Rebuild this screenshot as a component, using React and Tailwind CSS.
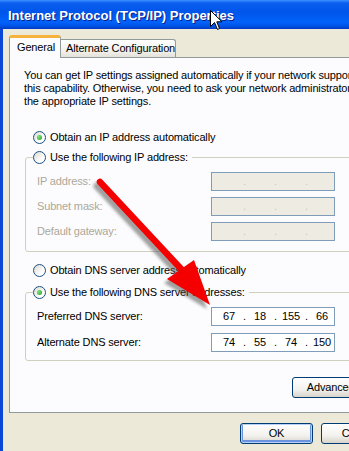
import React from 'react';

const labelFont = "font-['Liberation_Sans',Arial,sans-serif]";

function Radio({ checked }) {
  return (
    <span className="w-[13px] h-[13px] rounded-full border border-[#1C5180] bg-[linear-gradient(135deg,#DCD9CF,#FFFFFF_70%)] flex items-center justify-center shrink-0">
      {checked && (
        <span className="w-[5px] h-[5px] rounded-full bg-[radial-gradient(circle_at_35%_35%,#7BE27A,#21A121)]" />
      )}
    </span>
  );
}

function RadioRow({ checked, children }) {
  return (
    <div className="flex items-center gap-[4px] h-[13px]">
      <Radio checked={checked} />
      <span className="leading-[13px] whitespace-nowrap">{children}</span>
    </div>
  );
}

function IpBox({ octets, disabled }) {
  const vals = octets || ['', '', '', ''];
  return (
    <div
      className={`w-[124px] h-[19px] border border-[#7F9DB9] flex items-center pl-[5px] shrink-0 ${
        disabled ? 'bg-[#EEEBE2] text-[#C9C6BC]' : 'bg-white text-black'
      }`}
    >
      {vals.map((v, i) => (
        <React.Fragment key={i}>
          <span className="w-[24px] text-center leading-[13px]">{v}</span>
          {i < 3 && <span className="w-[7px] text-center leading-[13px]">.</span>}
        </React.Fragment>
      ))}
    </div>
  );
}

function FieldRow({ label, disabled, octets }) {
  return (
    <div className="flex items-center h-[19px]">
      <span className={`w-[185px] pl-[11px] whitespace-nowrap ${disabled ? 'text-[#ACA899]' : 'text-black'}`}>
        {label}
      </span>
      <IpBox disabled={disabled} octets={octets} />
    </div>
  );
}

function XpButton({ children, width, isDefault }) {
  return (
    <div
      className={`h-[21px] ${width} rounded-[3px] border border-[#003C74] bg-[linear-gradient(to_bottom,#FFFFFF,#F3F2EE_60%,#D8D4CB)] flex items-center justify-center shrink-0 ${
        isDefault ? 'shadow-[inset_0_0_0_1px_#B7D1F8,inset_0_-1px_0_2px_#6B93DE]' : ''
      }`}
    >
      {children}
    </div>
  );
}

export default function App() {
  return (
    <div className={`relative w-[349px] h-[451px] overflow-hidden bg-[#ECE9D8] text-[11px] tracking-[-0.15px] text-black flex flex-col ${labelFont}`}>
      {/* Title bar */}
      <div className="h-[29px] w-[420px] shrink-0 flex items-center pl-[8px] bg-[linear-gradient(to_bottom,#3A93FF_0px,#0B5EF0_3px,#0055EA_12px,#0262FA_22px,#0053E6_26px,#003AC4_29px)]">
        <span className="text-white font-bold text-[13px] leading-[16px] tracking-[0px] pt-[2px] [text-shadow:1px_1px_0_#0A1E8A] whitespace-nowrap">
          Internet Protocol (TCP/IP) Properties
        </span>
      </div>

      {/* Window body */}
      <div className="flex flex-1">
        <div className="w-[3px] bg-[#0A47D9] shrink-0" />
        <div className="pl-[6px] pt-[6px] flex flex-col">
          {/* Tabs */}
          <div className="flex items-end">
            <div className="relative z-10 mb-[-1px] h-[23px] w-[52px] bg-[#FCFCFE] border-x border-[#919B9C] border-t-[3px] border-t-[#F5B23D] rounded-t-[3px] pl-[7px] pt-[3px] leading-[13px]">
              General
            </div>
            <div className="h-[18px] w-[115px] border border-b-0 border-l-0 border-[#919B9C] rounded-tr-[3px] bg-[linear-gradient(to_bottom,#FFFFFF,#F0EFEA_70%,#E3E1D8)] pl-[5px] pt-[2px] leading-[13px] whitespace-nowrap">
              Alternate Configuration
            </div>
          </div>

          {/* Panel */}
          <div className="w-[400px] h-[356px] bg-[#FCFCFE] border border-[#919B9C] pl-[14px] pt-[11px] flex flex-col">
            <p className="leading-[13px] whitespace-nowrap">
              You can get IP settings assigned automatically if your network supports
              <br />
              this capability. Otherwise, you need to ask your network administrator for
              <br />
              the appropriate IP settings.
            </p>

            <div className="mt-[23px] pl-[9px]">
              <RadioRow checked>Obtain an IP address automatically</RadioRow>
            </div>

            <fieldset className="mt-[7px] ml-[1px] w-[370px] border border-[#D0D0BF] rounded-[3px] pb-[10px]">
              <legend className="ml-[7px] pr-[4px]">
                <RadioRow>Use the following IP address:</RadioRow>
              </legend>
              <div className="pt-[8px] flex flex-col gap-[6px]">
                <FieldRow label="IP address:" disabled />
                <FieldRow label="Subnet mask:" disabled />
                <FieldRow label="Default gateway:" disabled />
              </div>
            </fieldset>

            <div className="mt-[12px] pl-[9px]">
              <RadioRow>Obtain DNS server address automatically</RadioRow>
            </div>

            <fieldset className="mt-[9px] ml-[1px] w-[370px] border border-[#D0D0BF] rounded-[3px] pb-[8px]">
              <legend className="ml-[7px] pr-[4px]">
                <RadioRow checked>Use the following DNS server addresses:</RadioRow>
              </legend>
              <div className="pt-[8px] flex flex-col gap-[7px]">
                <FieldRow label="Preferred DNS server:" octets={['67', '18', '155', '66']} />
                <FieldRow label="Alternate DNS server:" octets={['74', '55', '74', '150']} />
              </div>
            </fieldset>

            <div className="mt-[16px] ml-[268px]">
              <XpButton width="w-[86px]">Advanced...</XpButton>
            </div>
          </div>

          {/* Dialog buttons */}
          <div className="mt-[10px] ml-[231px] flex gap-[8px]">
            <XpButton width="w-[73px]" isDefault>OK</XpButton>
            <XpButton width="w-[75px]">Cancel</XpButton>
          </div>
        </div>
      </div>

      {/* Red annotation arrow */}
      <svg className="absolute left-0 top-0 pointer-events-none" width="349" height="451" viewBox="0 0 349 451">
        <defs>
          <filter id="arrowShadow" x="-20%" y="-20%" width="140%" height="140%">
            <feGaussianBlur stdDeviation="1.6" />
          </filter>
        </defs>
        <g transform="translate(-3 4)" filter="url(#arrowShadow)" opacity="0.55">
          <line x1="100" y1="182" x2="183" y2="271" stroke="#555" strokeWidth="7" strokeLinecap="round" />
          <polygon points="167,279 194,260 210,305" fill="#555" />
        </g>
        <line x1="100" y1="182" x2="183" y2="271" stroke="#F40000" strokeWidth="6.5" strokeLinecap="round" />
        <polygon points="167,279 194,260 210,305" fill="#F40000" />
      </svg>

      {/* Mouse pointer */}
      <svg className="absolute left-[210px] top-[10px] pointer-events-none" width="13" height="21" viewBox="0 0 13 21">
        <path d="M0.5 0.5 L0.5 16.5 L4.5 12.5 L7.5 19.5 L9.5 18.5 L6.8 11.8 L12 11.8 Z" fill="white" stroke="black" strokeWidth="1" strokeLinejoin="round" />
      </svg>
    </div>
  );
}
